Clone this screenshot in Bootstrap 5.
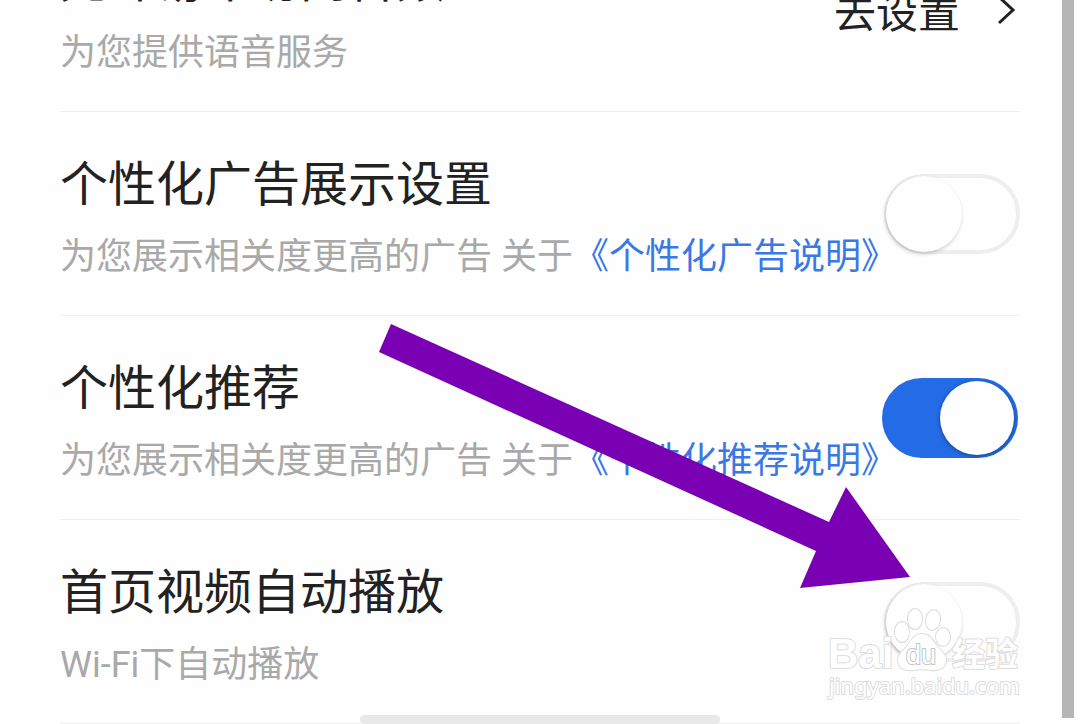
<!DOCTYPE html>
<html lang="zh-CN">
<head>
<meta charset="utf-8">
<meta name="viewport" content="width=device-width, initial-scale=1">
<title>设置</title>
<link href="https://cdn.jsdelivr.net/npm/bootstrap@5.3.0/dist/css/bootstrap.min.css" rel="stylesheet">
<style>
body { font-family: Roboto, "Noto Sans CJK SC", sans-serif; background: #fefefe; color: #222; }
.screen { padding: 0 60px; }
.edge-bar { right: 6px; top: 0; bottom: 6px; width: 12px; background: #b6b6b6; }
.setting { padding: 35px 0 34px; border-bottom: 1px solid #f0f0f0; }
.setting-text { flex: 1 1 0; min-width: 0; padding-top: 6px; }
.setting-title { font-size: 48px; line-height: 64px; font-weight: 400; margin: 0 0 16px; }
.setting-note { font-size: 36px; line-height: 48px; color: #a9a9a9; margin: 0; }
.setting-note a { color: #3a78e6; }
.go-link { font-family: "Noto Sans CJK SC", sans-serif; font-size: 42px; line-height: 48px; color: #222; gap: 36px; }
.form-check-input.toggle { width: 136px; height: 80px; margin: 0; border: 4px solid #eee; border-radius: 40px; background: #fefefe; appearance: none; position: relative; box-shadow: none; }
.toggle::before { content: ""; position: absolute; left: -2px; top: -2px; width: 76px; height: 76px; border-radius: 50%; background: #fefefe; box-shadow: -1px 2px 4px #0003; }
.form-check-input.toggle:checked { background: #236ce6; border-color: #236ce6; margin-right: 2px; }
.toggle:checked::before { left: 54px; top: -1px; width: 74px; height: 74px; box-shadow: 0 1px 4px #0006; }
.home-bar { bottom: 0; width: 360px; height: 9px; background: #e8e8e8; }
.arrow { left: 378px; top: 323px; }
.stamp { right: 54px; bottom: 18px; }
</style>
</head>
<body>
<div class="position-relative vh-100 overflow-hidden">
  <main class="screen d-flex flex-column justify-content-end h-100">
    <section class="setting d-flex align-items-center justify-content-between flex-shrink-0 text-nowrap">
      <div class="setting-text">
        <h2 class="setting-title">允许易车访问音频</h2>
        <p class="setting-note">为您提供语音服务</p>
      </div>
      <a href="#" class="go-link d-flex align-items-center text-decoration-none">去设置
        <svg width="24" height="32" viewBox="0 0 24 32" fill="none" stroke="#222" stroke-width="3" aria-hidden="true"><path d="M3 3l14 13L3 29"/></svg>
      </a>
    </section>
    <section class="setting d-flex align-items-center justify-content-between flex-shrink-0 text-nowrap">
      <div class="setting-text">
        <h2 class="setting-title"><label for="ads">个性化广告展示设置</label></h2>
        <p class="setting-note">为您展示相关度更高的广告 关于<a href="#" class="text-decoration-none">《个性化广告说明》</a></p>
      </div>
      <input class="form-check-input toggle flex-shrink-0" type="checkbox" role="switch" id="ads">
    </section>
    <section class="setting d-flex align-items-center justify-content-between flex-shrink-0 text-nowrap">
      <div class="setting-text">
        <h2 class="setting-title"><label for="rec">个性化推荐</label></h2>
        <p class="setting-note">为您展示相关度更高的广告 关于<a href="#" class="text-decoration-none">《个性化推荐说明》</a></p>
      </div>
      <input class="form-check-input toggle flex-shrink-0" type="checkbox" role="switch" id="rec" checked>
    </section>
    <section class="setting d-flex align-items-center justify-content-between flex-shrink-0 text-nowrap">
      <div class="setting-text">
        <h2 class="setting-title"><label for="video">首页视频自动播放</label></h2>
        <p class="setting-note">Wi-Fi下自动播放</p>
      </div>
      <input class="form-check-input toggle flex-shrink-0" type="checkbox" role="switch" id="video">
    </section>
  </main>
  <div class="home-bar position-absolute start-50 translate-middle-x rounded-pill"></div>
  <div class="edge-bar position-absolute"></div>
  <svg class="arrow position-absolute pe-none" width="534" height="266" viewBox="378 323 534 266" aria-hidden="true"><path d="M391 324L829 522L846 487L910 577L800 588L816 551L379 352Z" fill="#7a00b4"/></svg>
  <svg class="stamp position-absolute pe-none" width="200" height="100" viewBox="826 606 200 100" fill="#fff" stroke="#dcdcdc" stroke-width="2" stroke-linejoin="round" paint-order="stroke" aria-hidden="true">
    <text x="828" y="668" font-family="Liberation Sans" font-weight="700" font-size="42">Bai</text>
    <ellipse cx="902" cy="632" rx="7" ry="10"/><ellipse cx="915" cy="619" rx="7" ry="10"/><ellipse cx="933" cy="620" rx="7" ry="10" transform="rotate(10 933 620)"/><ellipse cx="943" cy="637" rx="7" ry="9"/>
    <path d="M922 634c-7 0-11 6-14 11-4 6-10 8-10 15 0 8 7 11 14 10 7-1 14-1 20 0 8 1 14-3 14-10 0-6-6-10-10-15-4-6-7-11-14-11z"/>
    <text x="906" y="664" font-family="Liberation Sans" font-size="27" stroke="#c4c4c4">du</text>
    <text x="952" y="666" font-family="Noto Sans CJK SC" font-weight="700" font-size="33">经验</text>
    <text x="829" y="694" font-family="Noto Sans" font-size="22">jingyan.baidu.com</text>
  </svg>
</div>
<script src="https://cdn.jsdelivr.net/npm/bootstrap@5.3.0/dist/js/bootstrap.bundle.min.js"></script>
</body>
</html>
